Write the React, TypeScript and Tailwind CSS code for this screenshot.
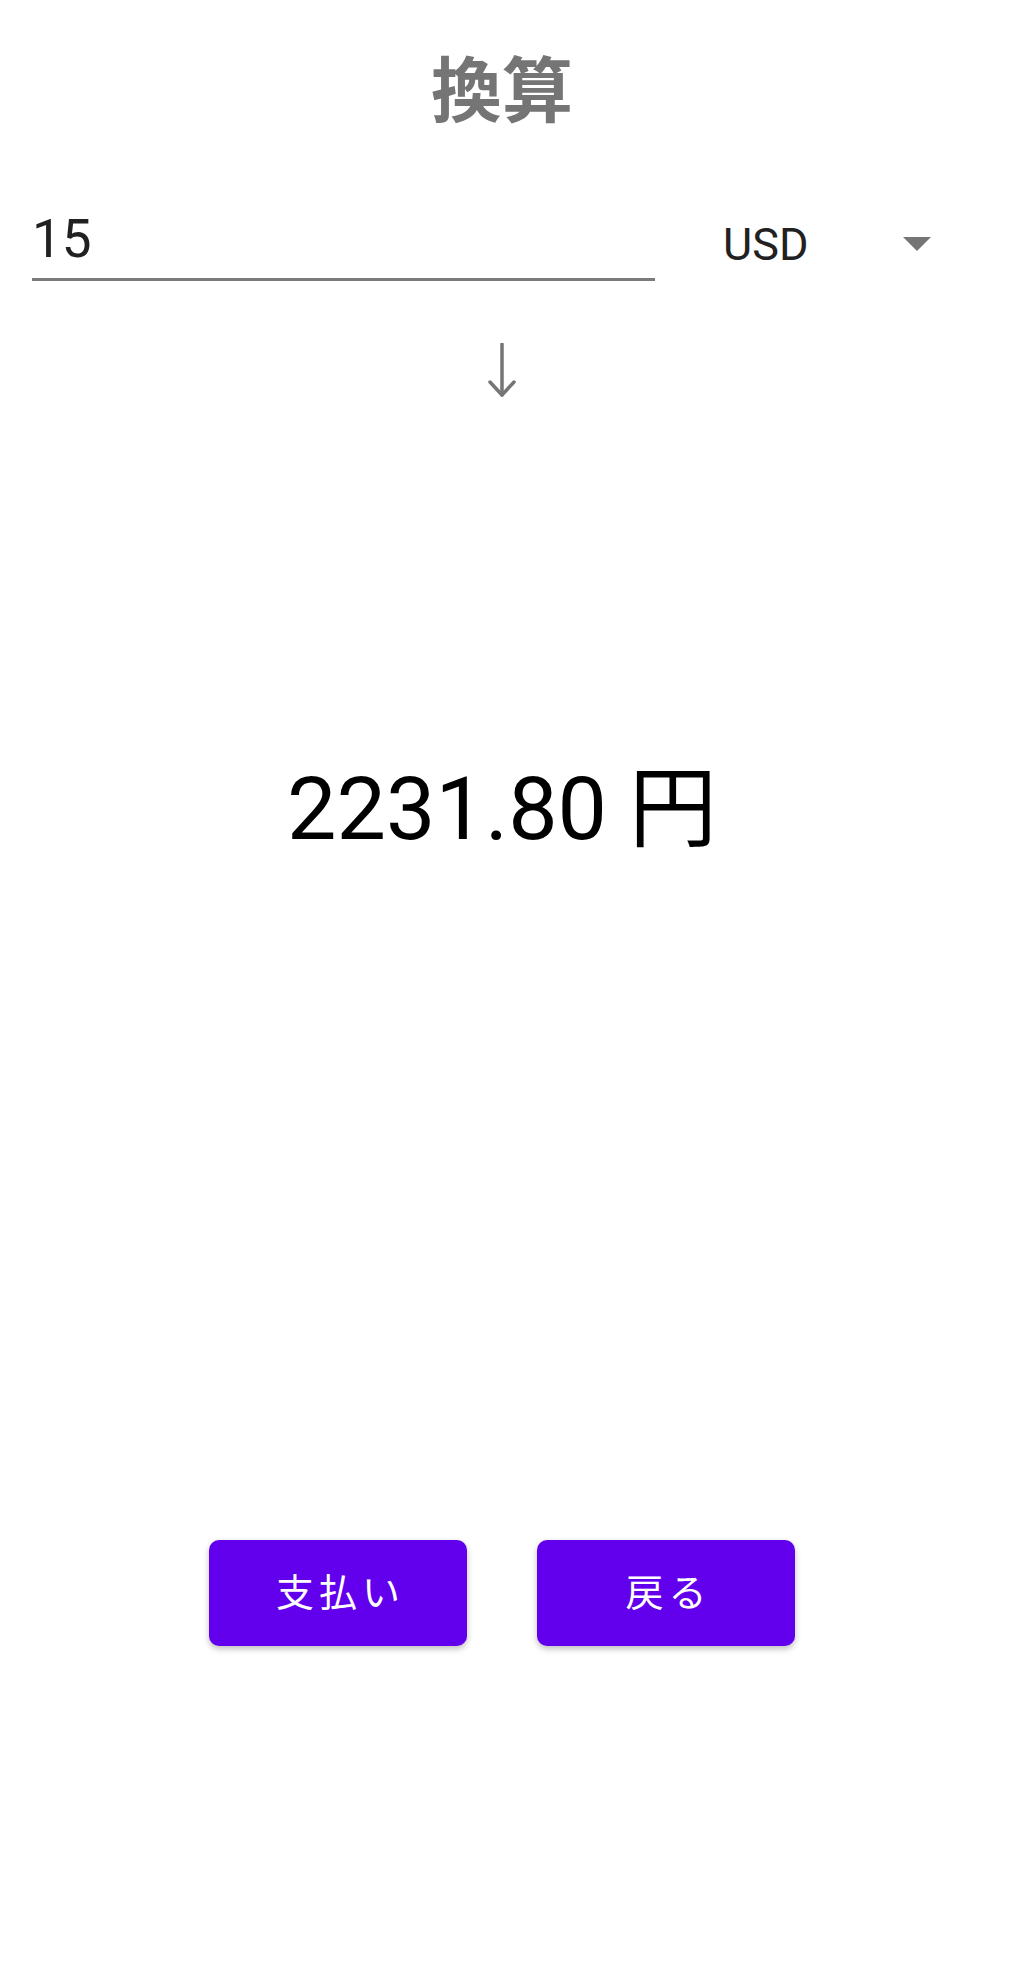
import React from "react";

const latin = { fontFamily: 'Roboto, "Noto Sans CJK JP", sans-serif' };

const ArrowDown: React.FC = () => (
  <svg width="28" height="54" viewBox="0 0 28 54" fill="none" stroke="#757575" strokeWidth="3.5" strokeLinecap="round" strokeLinejoin="round">
    <line x1="14" y1="1" x2="14" y2="52" />
    <polyline points="2,39 14,52 26,39" />
  </svg>
);

const PurpleButton: React.FC<{ label: string }> = ({ label }) => (
  <button className="w-[258px] h-[106px] rounded-[10px] bg-[#6200EE] text-white text-[38px] tracking-[0.13em] pl-[0.13em] shadow-[0_3px_6px_rgba(0,0,0,0.25)] flex items-center justify-center">
    {label}
  </button>
);

export default function App() {
  return (
    <div className="min-h-screen bg-white flex flex-col" style={latin}>
      <h1 className="mt-[56px] pr-[20px] text-center text-[71px] font-bold leading-none text-[#757575]">換算</h1>

      <div className="mt-[80px] flex items-start">
        <div className="ml-[32px] w-[623px] border-b-[3px] border-[#7b7b7b] pb-[7px]">
          <input
            defaultValue="15"
            className="w-full pl-0 h-[64px] text-[53px] leading-[64px] text-[#212121] outline-none bg-transparent"
          />
        </div>
        <div className="ml-[68px] mt-[11px] flex items-start">
          <span className="text-[45px] leading-[53px] text-[#212121]">USD</span>
          <span className="ml-[95px] mt-[19px] w-0 h-0 border-l-[14px] border-r-[14px] border-t-[14px] border-l-transparent border-r-transparent border-t-[#757575]" />
        </div>
      </div>

      <div className="mt-[62px] pr-[20px] flex justify-center">
        <ArrowDown />
      </div>

      <div className="mt-[360px] pr-[20px] flex justify-center">
        <span className="text-[88px] leading-[104px] text-black">2231.80 円</span>
      </div>

      <div className="mt-[679px] pr-[20px] flex justify-center gap-[70px]">
        <PurpleButton label="支払い" />
        <PurpleButton label="戻る" />
      </div>
    </div>
  );
}
